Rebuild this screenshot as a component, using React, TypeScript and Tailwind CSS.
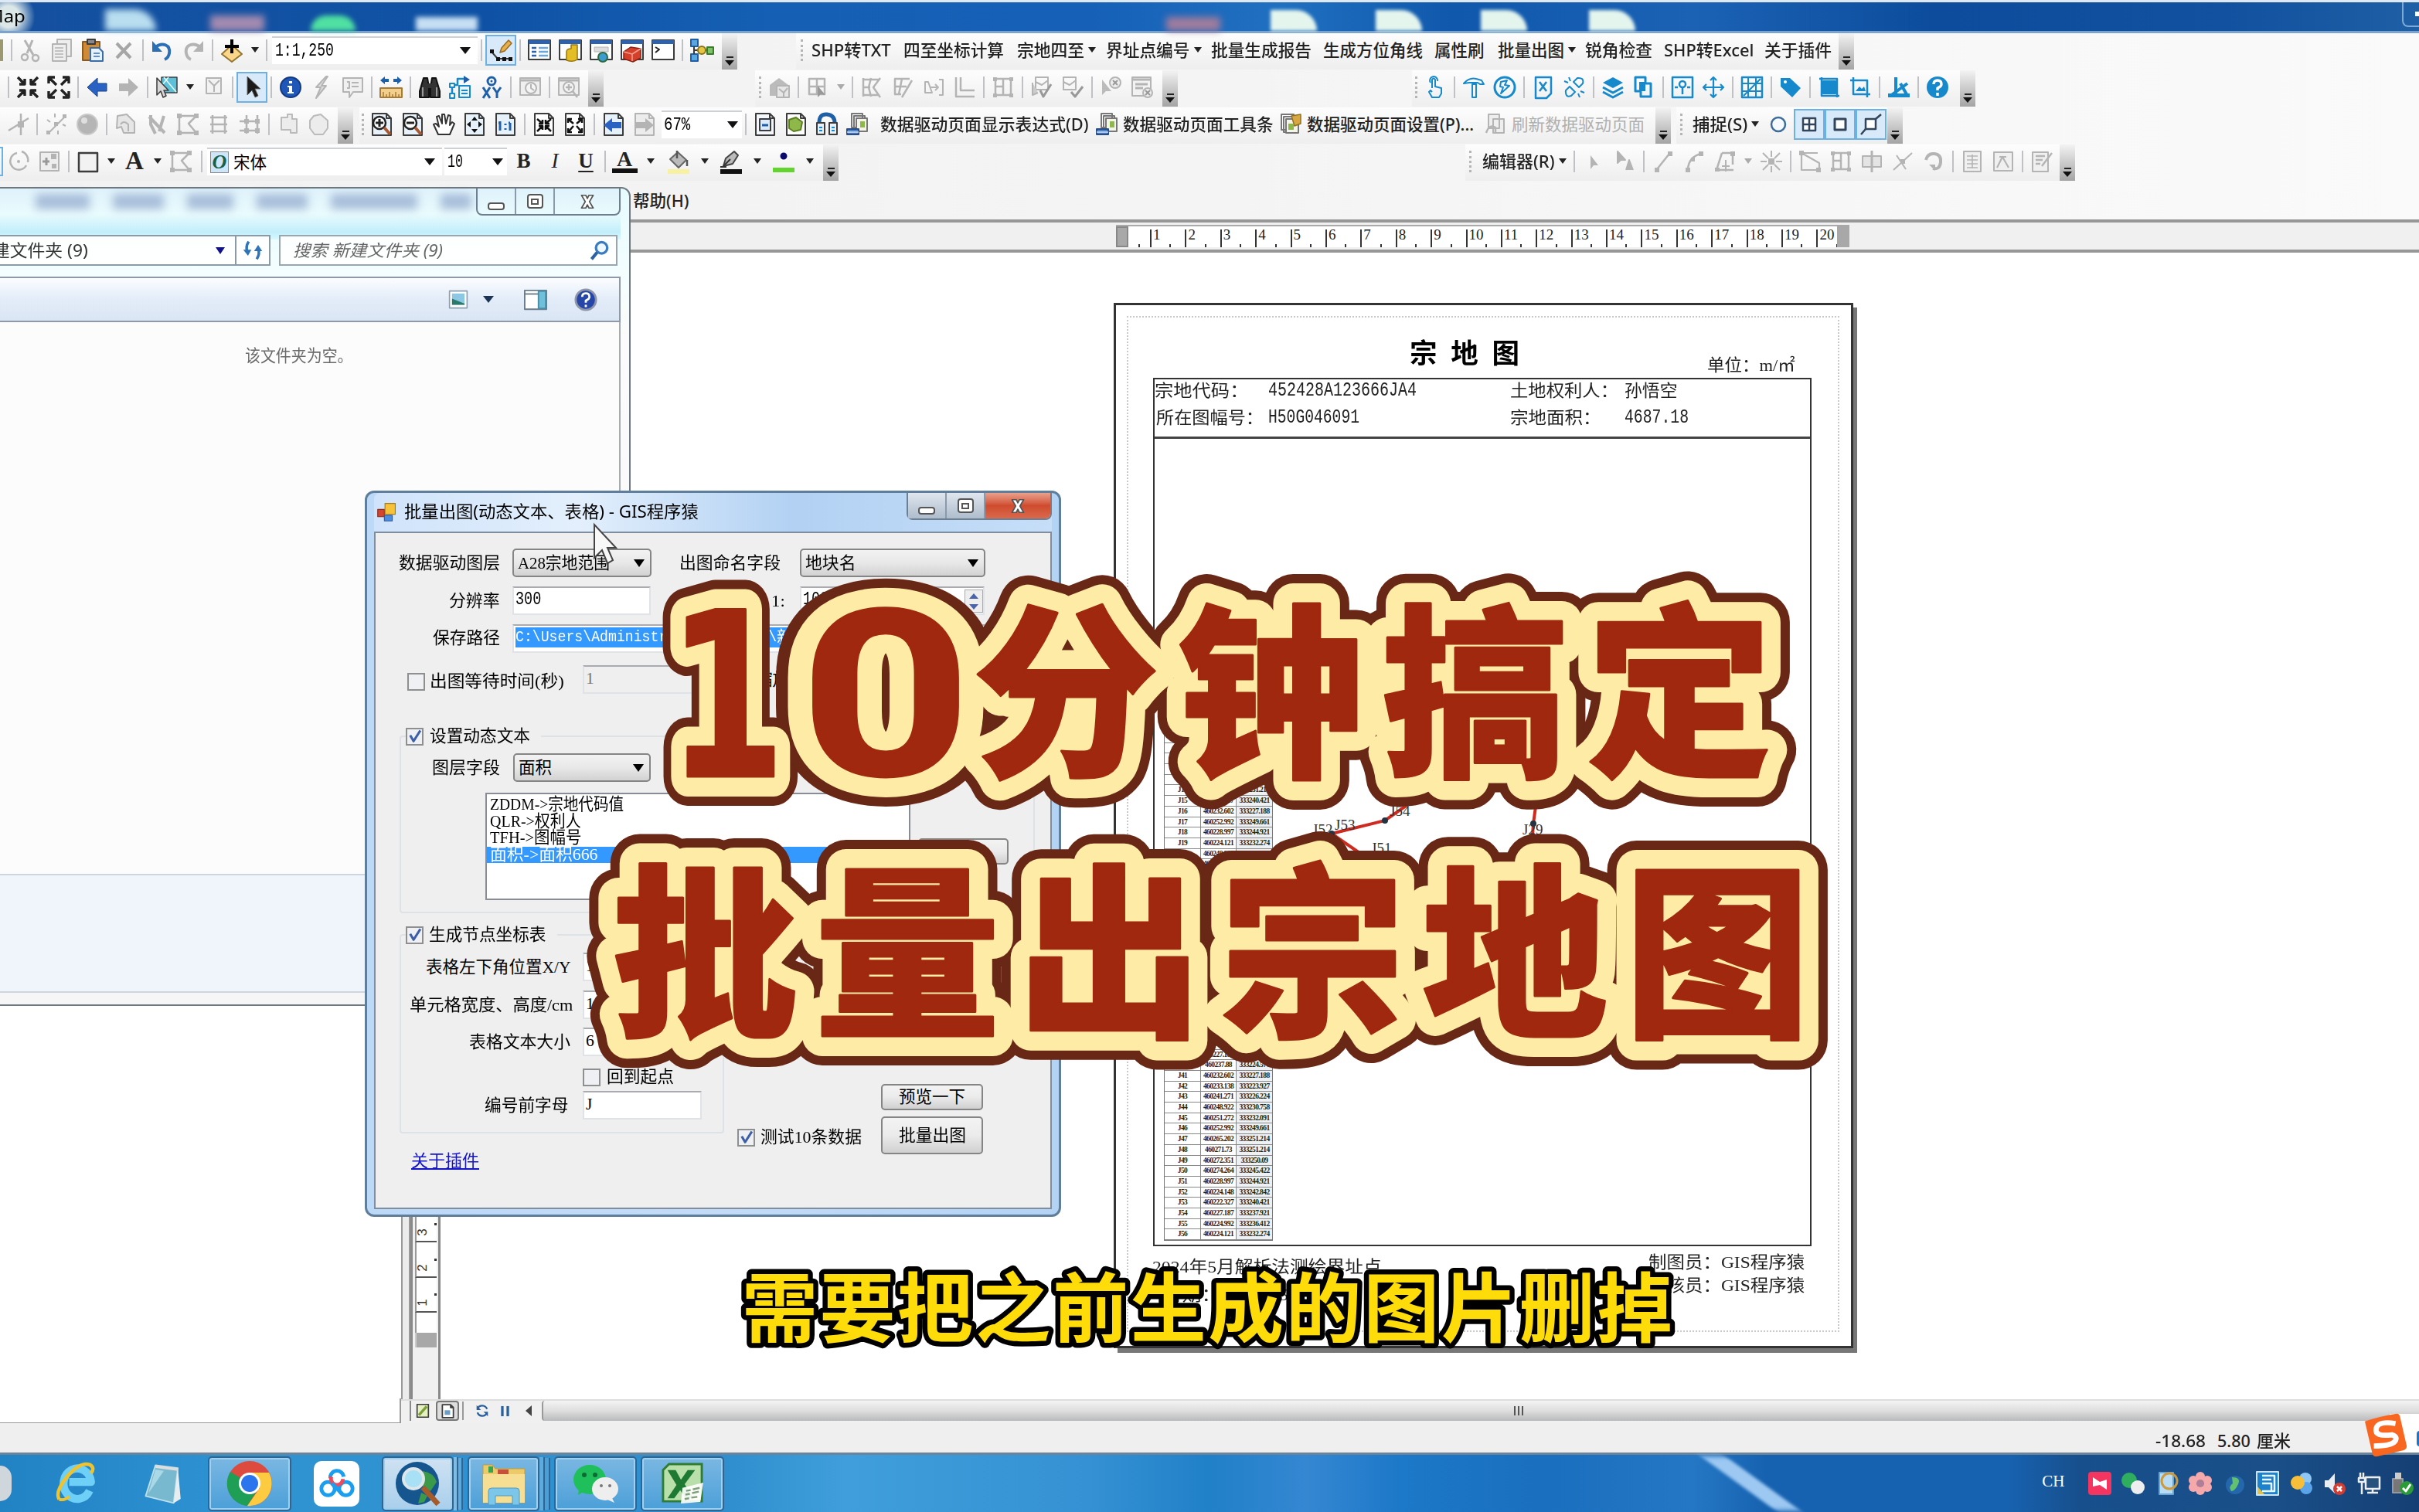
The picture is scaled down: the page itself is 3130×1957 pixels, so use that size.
import React, { useLayoutEffect, useRef, ReactNode } from "react";

const UI = "font-['Noto_Sans','Noto_Sans_CJK_SC',sans-serif]";
const SONG = "font-['Liberation_Serif','Noto_Sans_CJK_SC',serif]";
const MONO = "font-['Liberation_Mono','Noto_Sans_CJK_SC',monospace]";

/* One line of text, condensed or stretched to the width of its box. */
function Fit({ className = "", children }: { className?: string; children: ReactNode }) {
  const box = useRef<HTMLSpanElement>(null);
  const txt = useRef<HTMLSpanElement>(null);
  useLayoutEffect(() => {
    const b = box.current, t = txt.current;
    if (b && t) t.style.transform = `scaleX(${b.clientWidth / t.offsetWidth})`;
  }, []);
  return (
    <span ref={box} className={"block shrink-0 whitespace-pre text-[21.5px] leading-[26px] " + className}>
      <span ref={txt} className="inline-block origin-left align-top">{children}</span>
    </span>
  );
}

type Layer = [string, string?, string?, number?];
/* Icon from layers of [path, fill, stroke, strokeWidth] on a 32 unit grid. */
function Ic({ l, className = "size-8" }: { l: Layer[]; className?: string }) {
  return (
    <svg viewBox="0 0 32 32" className={"shrink-0 " + className}>
      {l.map(([d, f, s, w], i) => (
        <path key={i} d={d} fill={f || "none"} stroke={s || "none"} strokeWidth={w ?? 2} strokeLinejoin="round" />
      ))}
    </svg>
  );
}
const g = "#b4b4b4", k = "#3c3c3c", b = "#1689cc", nb = "#1e5fa8";
const rect = (x: number, y: number, w: number, h: number) => `M${x} ${y}h${w}v${h}h${-w}z`;
const circ = (x: number, y: number, r: number) => `M${x - r} ${y}a${r} ${r} 0 1 0 ${2 * r} 0a${r} ${r} 0 1 0 ${-2 * r} 0`;
const page = "M4 2h18l6 6v22h-24zM22 2v6h6";

const win = (extra: Layer[]): Layer[] => [[rect(2, 3, 28, 25), "#fff", k, 2], [rect(2, 3, 28, 5), "#2f62ad"], ...extra];
const ICONS: Record<string, Layer[]> = {
  cut: [["M8 3l11 19M18 3l-7 17", "", g, 3], [circ(8, 25, 4), "", g, 2.5], [circ(22, 26, 4), "", g, 2.5]],
  copy: [[rect(10, 2, 18, 22), "#eee", g], [rect(4, 8, 18, 22), "#eee", g], ["M7 13h11M7 17h11M7 21h11M7 25h11", "", g, 1.5]],
  paste: [[rect(3, 5, 22, 24), "#d08a35", "#8a5a20"], [rect(9, 2, 10, 6), "#888", k], ["M13 13h11l5 5v12h-16z", "#e4f2ff", "#3b6ea5"], ["M17 20h8M17 24h8", "", "#3b6ea5", 1.5]],
  del: [["M7 7l18 19M25 7l-18 19", "", "#a6a6a6", 4]],
  undo: [["M7 12c9-7 20-3 18 8q-1 6-6 8", "", "#2b6fb4", 4], ["M3 4v14h13z", "#2b6fb4"]],
  redo: [["M25 12c-9-7-20-3-18 8q1 6 6 8", "", g, 4], ["M29 4v14h-13z", g]],
  add: [["M16 9l13 12-13 10-13-10z", "#fbd68a", "#93752e"], ["M16 2v18M7 11h18", "", "#000", 4]],
  editor: [["M4 18l8 9h18", "", k, 2], [rect(2, 15, 5, 5), "#111"], [rect(10, 25, 5, 5), "#111"], [rect(18, 25, 5, 5), "#111"], [rect(26, 25, 5, 5), "#111"], ["M15 19l2-6 9-10 4 4-9 10z", "#e8b04a", "#9a6a22", 1.5]],
  toc: win([["M6 13h6M6 18h6M6 23h6", "", "#2f62ad", 2.5], ["M15 13h12M15 18h12M15 23h12", "", "#6ba7d8", 2.5]]),
  cat: win([["M11 18q0-4 6-4v-5h8v19q-5 4-14 1z", "#e4be27", "#98770c", 1.5]]),
  search: win([["M7 12h18v6h-18z", "#ddd", g, 1], [circ(18, 25, 6), "#3e9bd0", "#2b6a3a", 2]]),
  tool: win([["M5 18l9-6 13 2v12l-10 5-12-4z", "#d5402b", "#8a2214", 1.5], ["M5 18l11 3v9M16 21l11-7", "", "#f5a090", 1.5]]),
  py: win([["M6 12l5 3-5 4", "", "#222", 2]]),
  model: [[rect(2, 2, 9, 9), "#5aa7e0", nb], [rect(2, 21, 9, 9), "#5aa7e0", nb], ["M6 11v10M6 16h18", "", k], [circ(16, 16, 5), "#e7c544", "#8a741a"], [rect(23, 12, 8, 9), "#7bc365", "#3d7a2c"]],
  zin: [["M3 3l9 9M12 5v7H5M29 3l-9 9M20 5v7h7M3 29l9-9M5 20h7v7M29 29l-9-9M27 20h-7v7", "", "#222", 3.4]],
  zout: [["M13 13L5 5M3 11V3h8M19 13l8-8M21 3h8v8M13 19l-8 8M3 21v8h8M19 19l8 8M21 29h8v-8", "", "#222", 3.4]],
  back: [["M3 16L16 4v7h12v10h-12v7z", "#2a62c4", "#173f8c", 1]],
  fwd: [["M29 16L16 4v7h-12v10h12v7z", g]],
  select: [["M9 3h20v20h-20z", "#5cc0d8", k, 1.5], ["M12 3l16 19M9 14l9-11", "", "#e8fbff", 1.5], ["M3 4v22l5-5 3 8 4-2-3-7h6z", "#d7d7d7", k, 1.5]],
  clear: [[rect(7, 4, 19, 20), "#f2f2f2", g], ["M10 7l7 7 7-7M17 14v8", "", g]],
  ptr: [["M10 2v24l6-6 4 9 4-2-4-9h7z", "#1b1b1b", "#666", 1]],
  info: [[circ(16, 16, 13), "#1f57b8", "#123a83"], ["M14 8h4v3h-4zM12 14h6v8h2v2h-8v-2h2v-6h-2z", "#fff"]],
  bolt: [["M22 2l-13 14h6l-6 14 13-16h-6l8-12z", "#ddd", g]],
  popup: [["M4 4h25v18h-12l-5 7v-7h-8z", "#f0f0f0", g], ["M9 9h3v8h-3M15 10h9M15 15h9", "", g]],
  ruler: [["M2 7l6-5v3h5v4h-5v3zM30 7l-6-5v3h-5v4h5v3z", nb], [rect(2, 17, 28, 12), "#f3cf8e", "#a87b34"], ["M6 29v-7M10 29v-4M14 29v-7M18 29v-4M22 29v-7M26 29v-4", "", "#a87b34", 1.5]],
  find: [["M8 4h5l2 12v13h-12v-8zM24 4h-5l-2 12v13h12v-8z", "#333", "#111"], ["M7 16v12M25 16v12", "", "#999", 2], [rect(13, 11, 6, 6), "#333"]],
  route: [["M5 26v-13h7v-8h10", "", b, 2.5], ["M20 1l8 5-8 5z", nb], [rect(2, 24, 6, 6), "#fff", b], [rect(2, 11, 6, 5), "#fff", b], [rect(14, 14, 14, 15), "#e8f4ff", b], ["M17 20h8M17 24h8", "", b]],
  xy: [[circ(16, 8, 5), "", nb, 3], [circ(16, 8, 1.5), nb], ["M5 16l9 14M14 16l-9 14M18 16l5 7 5-7M23 23v7", "", nb, 3]],
  time: [["M3 4h26v22h-26z", "#efefef", g], ["M3 7h26", "", g, 3], [circ(17, 17, 7), "#f4f4f4", g], ["M17 12v5l4 3", "", g]],
  view: [["M3 4h26v22h-26z", "#efefef", g], ["M3 7h26", "", g, 3], [circ(16, 16, 7), "#f4f4f4", g], ["M16 12v8M12 16h8M21 21l6 8", "", g, 2.5]],
  house: [["M4 13l12-9 12 9v14h-24z", "#bbb"], [rect(13, 14, 16, 15), "#e6e6e6", g], ["M16 18l6 5 5-6M22 23v5", "", g]],
  meshp: [["M5 5h20v20h-20zM5 15h20M15 5v20", "", g, 2.5], ["M16 14v15l4-4 6 1z", "#999"]],
  mesh1: [["M5 4v24M5 6h10M5 16h9M5 26h9M15 4l-3 12 3 12M27 4l-9 12 9 13M15 6h11M15 26h10", "", g, 2.5]],
  mesh2: [["M5 5h20M5 15h16M5 25h9M6 5v20M15 5l-4 20M28 7l-13 22", "", g, 2.5]],
  gap: [["M5 9v14h9l-5-14zM12 16h8M23 6h5v20h-5M18 12l4 4-4 4", "", g, 2]],
  corner: [["M5 3v25h24M11 3v17h18", "", g, 2.5]],
  box: [["M6 5h20v21h-20zM16 5v21M6 15h10", "", g, 2.5], [rect(3, 3, 5, 5), g], [rect(24, 3, 5, 5), g], [rect(3, 24, 5, 5), g], [rect(24, 24, 5, 5), g]],
  chk: [["M8 3h16v16h-16zM8 9l8 4 8-6", "", g, 2], ["M4 10v16l7-3", "#ccc", g], ["M14 20l4 8 10-16", "", "#999", 3]],
  chk2: [["M4 3h16v16h-16zM4 9l8 4 8-6", "", g, 2], ["M14 22l5 6 10-13", "", "#999", 3]],
  nosel: [["M4 6v20l5-5h7z", "#bbb"], [circ(21, 10, 7), "#eee", g], ["M18 7l6 6M24 7l-6 6", "", "#999"]],
  tabx: [[rect(3, 3, 24, 24), "#f2f2f2", g], ["M3 6h24M7 12h16M7 17h10", "", g, 3], [circ(23, 23, 6), "#eee", g], ["M20 20l6 6M26 20l-6 6", "", "#999"]],
  hand1: [["M12 17V6q2-3 4 0v9l8 2v7l-3 5h-9l-4-7 2-2 2 2M10 10a5 5 0 1 1 9-2", "", b, 2]],
  hammer: [["M14 12h5v17h-5z", "", b, 2], ["M3 11q7-8 16-6l7 2 3 5h-5l-3-2h-11z", "", b, 2]],
  run: [[circ(16, 16, 13), "", b, 3], ["M11 9l8-2-3 6 6 1-11 10 3-8-4-1z", "", b, 2]],
  filex: [["M6 3h20v21l-6 6h-14z", "", b, 2.5], ["M11 9l9 12M20 9l-9 12", "", b, 2.5]],
  link: [["M5 20l5-5 7 7-5 5q-8 3-7-7zM27 11l-5 5-7-7 5-5q9-1 7 7zM3 8l5 2M9 3l2 5M29 23l-5-2M23 29l-2-5", "", b, 2]],
  layers: [["M16 3l13 7-13 7-13-7z", b], ["M3 16l13 7 13-7M3 22l13 7 13-7", "", b, 3]],
  merge: [["M5 3h13v8h7v17h-13v-7h-7z", "", b, 3], ["M10 9h8v12h-8z", b]],
  pin: [[rect(3, 3, 26, 26), "", b, 2.5], [circ(16, 12, 4), "", b, 2.5], ["M16 16v9M6 16h4M22 16h4", "", b, 2.5]],
  move: [["M16 3v26M3 16h26M12 7l4-4 4 4M12 25l4 4 4-4M7 12l-4 4 4 4M25 12l4 4-4 4", "", b, 2.2]],
  grid: [[rect(3, 3, 26, 26), "", b, 2.5], ["M11 3v26M21 3v26M3 11h26M3 21h26M5 27L27 5", "", b, 2]],
  tag: [["M3 4h12l14 13-11 12-15-14z", b], [circ(9, 9, 2), "#fff"]],
  crop1: [[rect(8, 8, 16, 16), b, b], ["M3 5h23v24M6 3v24h23", "", b, 2.5]],
  crop2: [["M3 7h22v22M7 3v22h22", "", b, 2.5], ["M10 21l5-6 3 3 3-3 2 6z", b]],
  angle: [["M12 3v22M5 27l22-16", "", b, 4], [rect(2, 24, 28, 5), b], ["M18 11l8 14", "", b, 4]],
  help: [[circ(16, 16, 14), b], ["M11 12q0-5 5-5t5 5q0 3-5 5v3M16 23v4", "", "#fff", 3.4]],
  cross: [["M20 2v28M4 24l26-16", "", g, 2.5], [rect(16, 12, 8, 8), g]],
  pts: [["M6 27L27 6", "", g, 2], [rect(3, 24, 5, 5), g], [rect(13, 13, 5, 5), g], [rect(24, 3, 5, 5), g], ["M14 2v5M4 10l4 3M28 18l-4-2M18 29v-5", "", g]],
  ball: [[circ(16, 16, 13), "#b5b5b5", "#c9c9c9"], [circ(12, 11, 4), "#dedede"]],
  page1: [["M5 5l12-2 10 10v14h-14l-3-8-6 2z", "#e6e6e6", g], ["M9 16q4-6 10 0v9", "", g]],
  tools: [["M6 6l20 21M25 5l-6 20M8 4v12l6 12", "", g, 4]],
  flat: [["M5 7h22M5 16h22M5 25h22M8 4v24M24 4v24", "", g, 2.5]],
  net: [["M12 4v24M26 4v24M3 12h26M3 24h26", "", g, 2.5], [rect(9, 9, 6, 6), g], [rect(23, 9, 6, 6), g], [rect(9, 21, 6, 6), g], [rect(23, 21, 6, 6), g]],
  dots: [["M7 7h8v-4h6v6h6v18h-8v-4h-12z", "#ececec", "#bbb", 2]],
  dots2: [["M9 5l9-2 9 8v10l-6 8h-11l-6-8v-10z", "#ececec", "#bbb", 2]],
  pzin: [[page, "#e6f1fa", k], [circ(13, 14, 8), "#fff", "#222", 2.5], ["M13 9v10M8 14h10", "", "#222", 3], ["M19 20l8 9", "", "#a85a32", 4]],
  pzout: [[page, "#e6f1fa", k], [circ(13, 14, 8), "#fff", "#222", 2.5], ["M8 14h10", "", "#222", 3], ["M19 20l8 9", "", "#a85a32", 4]],
  pan: [["M9 29l-6-13 3-1 4 4-3-13 3-1 4 10v-12h3l2 12 3-11 3 1-1 12 3-4 3 2-6 14z", "#fff", "#333", 2]],
  pfull: [[page, "#e6f1fa", k], ["M16 6l4 5h-8zM16 27l4-5h-8zM6 16l5-4v8zM26 16l-5-4v8z", "#111"]],
  p11: [[page, "#e6f1fa", k], ["M9 12v12M7 14h3M22 14v10M20 14h2M16 15v2M16 21v2", "", nb, 3]],
  pin2: [[page, "#fff", k], ["M7 9l7 6M25 9l-7 6M7 25l7-7M25 25l-7-7M14 10v5h-5M18 10v5h5M14 23v-5h-5M18 23v-5h5", "", "#111", 2.5]],
  pout2: [[page, "#fff", k], ["M14 15l-6-5M18 15l6-5M14 18l-6 7M18 18l6 7M7 14v-5h5M25 14v-5h-5M7 21v5h5M25 21v5h-5", "", "#111", 2.5]],
  pback: [[page, "#e6f1fa", k], ["M3 17l11-9v5h12v8h-12v5z", "#2a62c4"]],
  pfwd: [[page, "#ececec", g], ["M28 17l-11-9v5h-12v8h12v5z", g]],
  lay: [[page, "#f4f8fc", k], [rect(9, 9, 14, 15), "#dcebfb", k], ["M12 17h8", "", nb, 3]],
  lay2: [[page, "#fff", k], ["M7 10l9-3 8 6-2 10-9 2-6-4z", "#8fb84a", "#5d7f22"]],
  lay3: [["M6 14q0-12 10-11t10 11", "", nb, 5], ["M3 14h10v15h-10zM19 14h10v15h-10z", "#e6f1fa", k], ["M6 20h4M22 20h4M6 24h4M22 24h4", "", b]],
  ddp: [["M8 2h14v18h-14zM11 5h14v18h-14z", "#fff", "#777"], ["M14 8h14v17h-14z", "#f4f4e8", "#777"], [rect(19, 12, 6, 8), "#8fb84a"], ["M2 22h15v7h-15z", "#4d82c4", "#2a4d85"], ["M2 26h15", "", "#cfe2ff", 1.5]],
  ddp2: [["M3 3h16v20h-16zM6 6h16v20h-16z", "#fff", "#777"], ["M9 9h16v18h-16z", "#f4f4e8", "#777"], ["M16 5l12-2v12l-8 3z", "#d9a741", "#93701e", 1.5], [rect(12, 15, 7, 8), "#8fb84a"]],
  ddp3: [["M6 3h14v18h-14zM12 9h14v18h-14z", "#eee", g], ["M3 27q4-12 12-7v8", "", g, 2.5]],
  circle: [[circ(16, 16, 9), "#f4faff", "#3d6c99", 2.5]],
  grid4: [[rect(8, 8, 16, 16), "#fff", "#31465c", 2.5], ["M16 8v16M8 16h16", "", "#31465c", 2.5]],
  sq: [[rect(9, 9, 14, 14), "#fff", "#31465c", 3]],
  edge: [[rect(9, 9, 13, 13), "#fff", "#31465c", 2.5], ["M3 29l6-7M22 9l7-6", "", "#31465c", 2.5]],
  rot: [["M14 5a11 11 0 1 0 12 16", "", g, 2.5], ["M20 3a12 12 0 0 1 8 14", "", g, 2.5], [circ(16, 16, 2), g]],
  gridplus: [[rect(4, 4, 24, 24), "#eee", g], ["M7 16h9M12 11v10", "", "#999", 3], [rect(18, 6, 7, 7), g], [rect(19, 19, 6, 6), g]],
  shape: [[rect(4, 5, 24, 24), "#f2f2f2", k, 2.5]],
  poly: [["M5 5h22l-10 10 10 12h-22z", "", g, 2.5], [rect(2, 2, 6, 6), g], [rect(24, 2, 6, 6), g], [rect(2, 24, 6, 6), g], [rect(24, 24, 6, 6), g]],
  paint: [["M5 13l10-9 11 10-10 10z", "#bbb", "#666"], ["M14 12V2M27 14v8", "", "#555", 2.5], [rect(2, 26, 28, 6), "#f8f2a0"]],
  pen: [["M6 22l3-10 11-9 5 5-7 11z", "#bbb", "#444"], ["M6 22l9-9M2 23h8", "", "#333", 2], [rect(2, 26, 28, 6), "#111"]],
  dot: [[circ(16, 9, 4.5), "#0b0b6e"], [rect(2, 24, 28, 6), "#61d42e"]],
  arr: [["M12 8v18l4-5h6z", g]],
  arrA: [["M7 3v15l4-4h6zM18 27l4-13 5 13M20 22h6", g, g, 2]],
  ln: [["M8 26L24 6", "", g, 2.5], [rect(5, 24, 6, 6), g], [rect(22, 3, 6, 6), g]],
  ln2: [["M8 26q1-16 17-20", "", g, 2.5], [rect(5, 24, 6, 6), g], [rect(12, 11, 5, 5), g], [rect(22, 3, 6, 6), g]],
  trap: [["M12 5h14M12 5l-7 22h22M26 5v15", "", g, 2.5], [rect(23, 3, 6, 6), g], [rect(3, 24, 6, 5), g], ["M17 14v15M12 22h10", "", g]],
  burst: [["M16 2v8M16 22v8M2 16h8M22 16h8M5 5l7 7M27 5l-7 7M5 27l7-7M27 27l-7-7", "", g, 2], [rect(12, 12, 8, 8), g]],
  tri: [["M5 4v23h23v-9L5 5h21", "", g, 2.2], [rect(2, 2, 6, 6), g], [rect(24, 24, 6, 6), g]],
  mid: [[rect(4, 9, 24, 14), "#e4e4e4", g], ["M16 2v28", "", g, 3]],
  xx: [["M4 27L28 5M8 8l12 18", "", g, 2], [rect(13, 13, 6, 6), g]],
  rotr: [["M6 14q2-9 11-8t8 11-10 8", "", g, 4], ["M10 20h8v8z", g]],
  tbl: [[rect(5, 3, 22, 26), "#f0f0f0", g], ["M9 9h14M9 14h14M9 19h14M9 24h14M16 7v18", "", g, 1.6]],
  cert: [[rect(4, 4, 24, 24), "#f0f0f0", g], ["M8 24l7-14 8 14M11 10h9", "", g, 2.2]],
  edt: [[rect(4, 4, 20, 25), "#f0f0f0", g], ["M8 9h12M8 14h9M8 19h6M29 5l-13 17", "", g, 2.4]],
};

const B = ({ n, on = false }: { n: string; on?: boolean }) => (
  <span className={"flex h-10 w-10 shrink-0 items-center justify-center " + (on ? "border-2 border-[#6bb1e4] bg-[#d8eaf9]" : "")}>
    <Ic l={ICONS[n]} />
  </span>
);
const Tools = ({ n }: { n: string }) => (
  <>{n.trim().split(" ").map((x, i) => (x === "|" ? <Sep key={i} /> : x === "v" ? <Caret key={i} /> : <B key={i} n={x} />))}</>
);
const Sep = () => <span className="mx-[4px] h-7 w-[2px] shrink-0 bg-[#bfc1c4]" />;
const Caret = ({ className = "border-x-[5px] border-t-[7px] border-t-[#222]" }: { className?: string }) => (
  <span className={"mx-[5px] h-0 w-0 shrink-0 border-x-transparent " + className} />
);
const More = () => (
  <span className="-mb-[4px] flex w-[20px] shrink-0 flex-col items-center justify-end gap-[3px] self-stretch bg-gradient-to-b from-[#f3f3f3] to-[#a4a4a4] pb-[5px]">
    <span className="h-[2px] w-[9px] bg-[#222]" />
    <span className="h-0 w-0 border-x-[6px] border-t-[7px] border-x-transparent border-t-[#111]" />
  </span>
);
const Grip = () => <span className="mr-[3px] h-[28px] w-0 shrink-0 border-l-[3px] border-dotted border-[#b5b5b5]" />;
const Bar = ({ className = "", children }: { className?: string; children: ReactNode }) => (
  <div className={"flex h-[47px] shrink-0 items-center bg-gradient-to-b from-[#fdfdfd] to-[#eeeeee] pb-[4px] " + className}>{children}</div>
);
const L = ({ className, children }: { className: string; children: ReactNode }) => (
  <Fit className={"font-medium text-[#222] " + className}>{children}</Fit>
);
const Field = ({ className, children }: { className: string; children?: ReactNode }) => (
  <div className={"flex shrink-0 items-center justify-between border-t-2 border-[#cdd1d6] bg-white " + className}>{children}</div>
);
const BIG = "border-x-[7px] border-t-[9px] border-t-[#111]";
const DIM = "border-x-[5px] border-t-[7px] border-t-[#aaa]";

function Toolbars() {
  return (
    <div className={"flex h-[241px] flex-col gap-[1px] bg-gradient-to-r from-[#f2f2f2] via-[#f4f4f4] to-[#fafafa] " + UI}>
      <div className="flex">
        <Bar className="w-[954px]">
          <span className="h-7 w-[4px] bg-[#9c9870]" />
          <span className="w-[6px]" />
          <Sep /><Tools n="cut copy paste del | undo redo | add" /><Caret /><Sep />
          <Field className="ml-[2px] h-[36px] w-[266px] px-1">
            <Fit className={"w-[76px] !text-[24px] text-black " + MONO}>1:1,250</Fit><Caret className={BIG} />
          </Field>
          <Sep /><B n="editor" on /><Sep /><Tools n="toc cat search tool py | model" /><span className="grow" /><More />
        </Bar>
        <Bar className="ml-[76px] w-[1369px] pl-[6px]">
          <Grip />
          <L className="ml-[8px] w-[103px]">SHP转TXT</L>
          <L className="ml-[16px] w-[130px]">四至坐标计算</L>
          <L className="ml-[17px] w-[87px]">宗地四至</L><Caret />
          <L className="ml-[8px] w-[109px]">界址点编号</L><Caret />
          <L className="ml-[7px] w-[130px]">批量生成报告</L>
          <L className="ml-[15px] w-[129px]">生成方位角线</L>
          <L className="ml-[15px] w-[65px]">属性刷</L>
          <L className="ml-[17px] w-[86px]">批量出图</L><Caret />
          <L className="ml-[7px] w-[87px]">锐角检查</L>
          <L className="ml-[15px] w-[116px]">SHP转Excel</L>
          <L className="ml-[14px] w-[87px]">关于插件</L>
          <span className="grow" /><More />
        </Bar>
      </div>
      <div className="flex">
        <Bar className="w-[781px] pl-[6px]">
          <Sep /><Tools n="zin zout | back fwd | select v clear |" />
          <B n="ptr" on /><Sep />
          <Tools n="info bolt popup | ruler | find route xy | time | view" /><span className="grow" /><More />
        </Bar>
        <Bar className="ml-[196px] w-[547px] pl-[5px]">
          <Grip /><Tools n="house | meshp" /><Caret className={DIM} /><Tools n="| mesh1 mesh2 gap corner | box | chk chk2 | nosel tabx" /><span className="grow" /><More />
        </Bar>
        <Bar className="ml-[303px] w-[729px] pl-[4px]">
          <Grip /><Tools n="hand1 | hammer run | filex link | layers merge | pin move | grid | tag | crop1 crop2 | angle | help" /><span className="grow" /><More />
        </Bar>
      </div>
      <div className="flex">
        <Bar className="w-[457px] pl-[3px]">
          <Tools n="cross | pts ball | page1 tools poly flat net | dots dots2" /><span className="grow" /><More />
        </Bar>
        <Bar className="ml-[8px] w-[1697px] pl-[3px]">
          <Grip /><Tools n="pzin pzout pan pfull p11 | pin2 pout2 |" /><Tools n="pback pfwd" />
          <Field className="ml-[2px] h-[36px] w-[104px] pl-[3px] pr-0">
            <Fit className={"w-[34px] !text-[24px] text-black " + MONO}>67%</Fit><Caret className={BIG} />
          </Field>
          <Sep /><Tools n="lay lay2 lay3 ddp" />
          <L className="ml-[9px] w-[270px]">数据驱动页面显示表达式(D)</L>
          <span className="w-[4px]" /><B n="ddp" />
          <L className="w-[195px]">数据驱动页面工具条</L>
          <span className="w-[3px]" /><B n="ddp2" />
          <L className="w-[216px]">数据驱动页面设置(P)...</L>
          <span className="w-[9px]" /><B n="ddp3" />
          <Fit className="w-[172px] text-[#b0b0b0]">刷新数据驱动页面</Fit>
          <span className="grow" /><More />
        </Bar>
        <Bar className="ml-[7px] w-[293px] pl-[5px]">
          <Grip /><L className="ml-[10px] w-[71px]">捕捉(S)</L><Caret /><B n="circle" />
          <B n="grid4" on /><B n="sq" on /><B n="edge" on /><span className="grow" /><More />
        </Bar>
      </div>
      <div className="flex">
        <Bar className="w-[1085px]">
          <span className="h-[38px] w-[4px] border-y-2 border-r-2 border-[#6bb1e4]" />
          <Tools n="rot gridplus | shape v" />
          <span className="w-10 text-center font-['Liberation_Serif',serif] text-[33px] font-bold text-[#222]">A</span>
          <Caret /><Tools n="poly" /><span className="w-[2px]" /><Sep />
          <Field className="ml-[2px] h-[36px] w-[304px] px-1">
            <span className="flex items-center gap-[6px]">
              <span className="flex h-7 w-6 items-center justify-center border border-[#888] bg-[#cde6fa] font-['Liberation_Serif',serif] text-[26px] font-bold italic leading-none text-[#17614a]">O</span>
              <Fit className="w-[43px] text-black">宋体</Fit>
            </span>
            <Caret className={BIG} />
          </Field>
          <Field className="ml-[3px] h-[36px] w-[81px] pl-1">
            <Fit className={"w-[20px] !text-[24px] text-black " + MONO}>10</Fit><Caret className={BIG} />
          </Field>
          <span className="ml-1 flex font-['Liberation_Serif',serif] text-[27px] font-bold leading-none text-[#222]">
            <span className="w-[35px] text-center">B</span>
            <span className="ml-[3px] w-[40px] text-center font-normal italic">I</span>
            <span className="w-[40px] text-center underline underline-offset-4">U</span>
          </span>
          <Sep /><span className="w-[2px]" />
          <span className="flex w-[36px] flex-col items-center font-['Liberation_Serif',serif] text-[28px] font-bold leading-[24px] text-[#222]">A<span className="h-[6px] w-[33px] bg-[#111]" /></span>
          <span className="flex px-[6px]"><Caret /></span><B n="paint" />
          <span className="flex px-[4px]"><Caret /></span><B n="pen" />
          <span className="flex px-[4px]"><Caret /></span><B n="dot" />
          <span className="flex pl-[4px]"><Caret /></span><span className="grow" /><More />
        </Bar>
        <Bar className="ml-[811px] w-[789px] pl-[5px]">
          <Grip /><L className="ml-[11px] w-[94px]">编辑器(R)</L><Caret />
          <Tools n="| arr arrA | ln ln2 trap" /><Caret className={DIM} />
          <Tools n="burst | tri box mid xx rotr | tbl cert | edt" /><span className="grow" /><More />
        </Bar>
      </div>
      <div className="flex grow items-center pl-[819px]"><L className="w-[73px]">帮助(H)</L></div>
    </div>
  );
}

function TitleBar() {
  return (
    <div className="flex h-[43px] items-end border-b-[3px] border-t-[3px] border-b-[#7aa3cf] border-t-[#dfe9f5] bg-[linear-gradient(90deg,#15509f_0%,#0f52a5_20%,#1560b4_32%,#1660b8_45%,#2070c0_53%,#1058ac_60%,#1b62b5_70%,#0d4c9c_80%,#11519f_92%,#1e5fa5_100%)]">
      <div className={"-ml-[17px] flex h-full w-[70px] items-center bg-[radial-gradient(circle_at_40%_50%,#dce8e8_30%,transparent_75%)] pb-[1px] " + UI}>
        <Fit className="w-[50px] text-black">Map</Fit>
      </div>
      <span className="ml-[83px] h-[28px] w-[66px] rounded-tr-[28px] bg-[#b9def0] blur-[4px]" />
      <span className="ml-[70px] h-[20px] w-[70px] bg-[#a58bb0] blur-[5px]" />
      <span className="ml-[60px] h-[20px] w-[58px] rounded-t-full bg-[#4fe0a2] blur-[3px]" />
      <span className="ml-[78px] h-[18px] w-[80px] bg-[#c6dff3] blur-[3px]" />
      <span className="ml-[891px] h-[18px] w-[70px] bg-[#a17c9c] blur-[5px]" />
      <span className="ml-[65px] h-[27px] w-[60px] rounded-tr-[40px] bg-[#e4f5ee] blur-[2px]" />
      <span className="ml-[76px] h-[27px] w-[60px] rounded-tr-[40px] bg-[#e4f5ee] blur-[2px]" />
      <span className="ml-[76px] h-[27px] w-[60px] rounded-tr-[40px] bg-[#e4f5ee] blur-[2px]" />
      <span className="ml-[80px] h-[27px] w-[60px] rounded-tr-[40px] bg-[#e4f5ee] blur-[2px]" />
      <span className="ml-auto flex h-[32px] w-[22px] items-center justify-end self-start rounded-bl-lg border-b-2 border-l-2 border-[#7ea9d6]"><span className="h-[6px] w-[5px] bg-white" /></span>
    </div>
  );
}

function HRuler() {
  return (
    <div className="flex h-[43px] items-center border-y-[4px] border-[#979797] bg-[#f0f0f0] pl-[1444px]">
      <div className="flex h-[29px] w-[949px] border-t-2 border-[#aaa] bg-white">
        <div className="h-full w-[16px] shrink-0 border-2 border-[#888] bg-[#a8a8a8]" />
        <div className="flex w-[28px] shrink-0 items-end justify-center"><span className="h-[4px] w-[2px] bg-[#333]" /></div>
        {Array.from({ length: 20 }, (_, i) => (
          <div key={i} className="flex w-[45.4px] shrink-0 justify-between">
            <span className="mt-[4px] h-[23px] border-l-2 border-[#333] pl-[2px] font-['Liberation_Serif',serif] text-[19px] leading-[13px] text-[#222]">{i + 1}</span>
            <span className="mr-[18px] h-[4px] w-[2px] self-end bg-[#333]" />
          </div>
        ))}
      </div>
      <div className="-ml-[16px] h-[29px] w-[16px] bg-[#a8a8a8]" />
    </div>
  );
}

const COORDS = [
  ["460237.88", "333224.576"], ["460232.602", "333227.188"], ["460233.138", "333223.927"], ["460241.271", "333226.224"],
  ["460248.922", "333230.758"], ["460251.272", "333232.091"], ["460252.992", "333249.661"], ["460265.202", "333251.214"],
  ["460271.73", "333251.214"], ["460272.351", "333250.09"], ["460274.264", "333245.422"], ["460228.997", "333244.921"],
  ["460224.148", "333242.842"], ["460222.327", "333240.421"], ["460227.187", "333237.921"], ["460224.992", "333236.412"], ["460224.121", "333232.274"],
];

function Table() {
  return (
    <div className={"ml-[12px] mt-[379px] w-[141px] border border-[#777] " + SONG}>
      {Array.from({ length: 48 }, (_, i) => {
        const c = COORDS[i < 31 ? (i * 5) % 17 : i - 31];
        return (
          <div key={i} className="flex h-[13.7px] border-b border-[#888] text-center text-[9.5px] font-bold leading-[13px] tracking-[-0.6px] text-[#222]">
            <span className="w-[47px] border-r border-[#888]">J{i + 9}</span>
            <span className="w-[46px] overflow-hidden border-r border-[#888]">{c[0]}</span>
            <span className="w-[46px] overflow-hidden bg-[#eef1f3]">{c[1]}</span>
          </div>
        );
      })}
    </div>
  );
}

function MapSheet() {
  return (
    <div className={"absolute left-[1441px] top-[392px] h-[1353px] w-[957px] border-[3px] border-[#333] bg-white p-[14px] text-[#222] shadow-[5px_6px_0_#777] " + SONG}>
      <div className="flex h-[1315px] w-[922px] flex-col border-2 border-dotted border-[#c9c9c9] px-[32px] pt-[24px]">
        <div className="flex h-[54px]">
          <Fit className="ml-[332px] mt-[5px] w-[142px] !text-[35px] !leading-[38px] font-bold text-black">宗  地  图</Fit>
          <Fit className="ml-[243px] mt-[25px] w-[114px]">单位：m/㎡</Fit>
        </div>
        <div className="flex h-[1124px] w-[852px] shrink-0 flex-col border-2 border-[#333]">
          <div className="flex h-[77px] shrink-0 flex-col gap-[9px] border-b-[3px] border-[#444] pt-[2px]">
            <div className="flex">
              <Fit className="w-[122px]">宗地代码：</Fit><Fit className={"ml-[25px] w-[192px] !text-[25px] " + MONO}>452428A123666JA4</Fit>
              <Fit className="ml-[121px] w-[140px]">土地权利人：</Fit><Fit className="ml-[8px] w-[69px]">孙悟空</Fit>
            </div>
            <div className="flex">
              <Fit className="ml-[2px] w-[139px]">所在图幅号：</Fit><Fit className={"ml-[6px] w-[118px] !text-[25px] " + MONO}>H50G046091</Fit>
              <Fit className="ml-[195px] w-[118px]">宗地面积：</Fit><Fit className={"ml-[30px] w-[83px] !text-[25px] " + MONO}>4687.18</Fit>
            </div>
          </div>
          <Table />
        </div>
        <div className="flex justify-between">
          <Fit className="-ml-[1px] mt-[14px] w-[297px]">2024年5月解析法测绘界址点</Fit>
          <div className="mr-[11px] mt-[8px] flex flex-col gap-[4px]">
            <Fit className="w-[202px]">制图员：GIS程序猿</Fit><Fit className="w-[202px]">审核员：GIS程序猿</Fit>
          </div>
        </div>
        <Fit className="-mt-[14px] w-[200px]">  日期：2024年5月</Fit>
      </div>
      <svg viewBox="1690 1000 330 120" className="absolute left-[246px] top-[605px] h-[120px] w-[330px] font-['Liberation_Serif',serif]">
        <path d="M1840 1020L1818 1044L1792 1062L1723 1079L1765 1108M1989 1020L1987 1044L1984 1066L1982 1095" fill="none" stroke="#cf2a20" strokeWidth="4" />
        <g fill="#234"><circle cx="1792" cy="1062" r="4" /><circle cx="1723" cy="1079" r="4" /><circle cx="1984" cy="1066" r="4" /></g>
        <g fontSize="19" fill="#333">
          <text x="1798" y="1056">J54</text><text x="1727" y="1074">J53</text><text x="1698" y="1080">J52</text>
          <text x="1774" y="1104">J51</text><text x="1970" y="1080">J29</text><text x="2000" y="1096">J30</text>
        </g>
      </svg>
    </div>
  );
}

function MapView() {
  return (
    <div className="flex h-[1484px] bg-white">
      <div className="w-[519px] bg-white" />
      <div className="w-[12px] border-x-2 border-[#999] bg-[#ececec]" />
      <div className="flex w-[39px] flex-col items-center justify-end border-x-[3px] border-[#888] bg-[#f0f0f0] pb-[67px]">
        {[3, 2, 1].map((n) => (
          <div key={n} className="flex h-[45.4px] w-[28px] shrink-0 items-end justify-between border-b-2 border-l-2 border-[#555] border-l-[#999] bg-white">
            <span className="mb-[1px] block h-[20px] w-[16px] -rotate-90 text-center font-['Liberation_Sans',sans-serif] text-[17px] leading-[20px] text-[#333]">{n}</span>
            <span className="mb-[20px] h-[3px] w-[3px] bg-[#333]" />
          </div>
        ))}
        <div className="h-[26px] w-[28px] shrink-0 border-l-2 border-[#999] bg-white" />
        <div className="h-[19px] w-[28px] shrink-0 border-l-2 border-[#ccc] bg-[#a8a8a8]" />
      </div>
    </div>
  );
}

function ScrollRow() {
  return (
    <div className="flex h-[31px] items-center border-t-2 border-[#ddd] bg-[#f0f0f0] pb-[3px]">
      <div className="h-[33px] w-[519px] border-b-2 border-r-2 border-[#999] bg-white" />
      <div className="h-full w-[13px] border-r-2 border-[#888]" />
      <Ic className="ml-[6px] size-[18px]" l={[[rect(3, 1, 26, 30), "#e6f0c0", k, 3], ["M7 26l18-20", "", "#7aa03a", 6]]} />
      <span className="ml-[8px] flex h-[26px] w-[30px] items-center justify-center rounded border-2 border-[#777] bg-[#ddd]">
        <Ic className="size-[19px]" l={[[page, "#fff", k, 3], ["M9 14h12v10h-12z", "#6a9ec4"]]} />
      </span>
      <span className="ml-[4px] h-6 w-[2px] bg-[#999]" />
      <Ic className="ml-[15px] size-[18px]" l={[["M27 12A12 12 0 0 0 5 11M5 20a12 12 0 0 0 22 1", "", "#2a5f9e", 4], ["M3 3v11h10zM29 29v-11h-10z", "#2a5f9e"]]} />
      <Ic className="ml-[13px] size-[15px]" l={[[rect(5, 2, 7, 28), "#2a5f9e"], [rect(20, 2, 7, 28), "#2a5f9e"]]} />
      <span className="ml-[19px] h-0 w-0 border-y-[7px] border-r-[8px] border-y-transparent border-r-[#444]" />
      <div className="ml-[13px] flex h-[26px] grow items-center gap-[3px] rounded-l border-l-2 border-[#999] bg-gradient-to-b from-[#f3f3f3] via-[#dedede] to-[#b9babc] pl-[1256px]">
        <span className="h-3 w-[2px] bg-[#555]" /><span className="h-3 w-[2px] bg-[#555]" /><span className="h-3 w-[2px] bg-[#555]" />
      </div>
    </div>
  );
}

function StatusBar() {
  return (
    <div className={"relative flex h-[41px] items-center border-b-[3px] border-[#6f8396] bg-[#efefef] pt-[7px] " + UI}>
      <L className="ml-[2789px] w-[65px]">-18.68</L><L className="ml-[15px] w-[43px]">5.80</L><L className="ml-[8px] w-[44px]">厘米</L>
      <div className="absolute left-[3092px] top-[-12px] h-[50px] w-[38px] bg-white" />
      <svg viewBox="0 0 60 60" className="absolute left-[3059px] top-[-13px] size-[58px]">
        <path d="M1 11Q22 4 42 1Q47 0 48 5L57 44Q57 49 52 50L18 58Q12 59 11 54Z" fill="#f9661f" />
        <path d="M42 14q-24-4-26 7t21 8q9 3 4 9t-28 6" fill="none" stroke="#fff" strokeWidth="7" />
      </svg>
      <span className="absolute left-[3127px] top-[10px] h-[20px] w-[8px] rounded-full bg-[#1e74c8]" />
    </div>
  );
}

const TaskBtn = ({ className, children }: { className: string; children: ReactNode }) => (
  <div className={"flex h-[71px] shrink-0 items-center justify-center rounded-[5px] border-2 border-[#2f6592] shadow-[inset_0_0_0_2px_#9ed0f1] " + className}>{children}</div>
);
const pane = "bg-gradient-to-b from-[#7ab7e2] to-[#4a9fd8]";

function Taskbar() {
  return (
    <div className="flex h-[74px] items-center bg-[linear-gradient(90deg,#2182c4_0%,#2f93d2_10%,#2f8fce_30%,#3f9edb_35%,#3591d3_45%,#2080c8_50%,#3587d2_54%,#1c78c8_58%,#1a6fbe_64%,#2477c4_70%,#1762b0_73%,#1762b0_83%,#174f8c_86%,#1a4f88_94%,#153f74_100%)]">
      <div className="h-[46px] w-[15px] rounded-r-full bg-[#cfd6dc]" />
      <Ic className="ml-[54px] size-[60px]" l={[["M25 21a9.500 10.500 0 1 1 1-6h-15", "", "#6fd0f7", 5.5], ["M4 27Q1 22 9 12Q18 1 25 3Q29 5 26 9", "", "#f0c32c", 2.4], ["M4 27q4 1 7-2", "", "#f0c32c", 2]]} />
      <Ic className="ml-[54px] size-[58px]" l={[["M10 3l16 2-3 25-20-5z", "#79b9cf", "#bde0ea", 1], ["M26 5l2 22-5 3z", "#e8eef0"], ["M10 3l16 2v2l-16-2z", "#ddd"], ["M10 6l6 1-11 16z", "#a9d9e6"]]} />
      <TaskBtn className={"ml-[28px] w-[108px] " + pane}>
        <svg viewBox="0 0 60 60" className="size-[60px]">
          <circle cx="30" cy="30" r="29" fill="#dd4b3e" />
          <path d="M30 30L5 15A29 29 0 0 0 27 59L41 37Z" fill="#1f9e55" />
          <path d="M30 16H55A29 29 0 0 1 27 59L43 36Z" fill="#fdcb3f" />
          <circle cx="30" cy="30" r="14" fill="#fff" /><circle cx="30" cy="30" r="11" fill="#2a74ee" />
        </svg>
      </TaskBtn>
      <div className="ml-[29px] flex size-[59px] items-center justify-center rounded-[10px] bg-white">
        <svg viewBox="0 0 50 50" className="size-[48px]" fill="none" strokeWidth="5">
          <circle cx="13" cy="32" r="9" stroke="#1a9ff0" /><circle cx="37" cy="32" r="9" stroke="#1a9ff0" />
          <path d="M16 18a9 9 0 0 1 18-2" stroke="#1a9ff0" /><circle cx="25" cy="19" r="8" stroke="#ef4a5a" strokeDasharray="28 23" />
          <path d="M18 25l14 14" stroke="#1a9ff0" />
        </svg>
      </div>
      <TaskBtn className="ml-[29px] w-[93px] bg-gradient-to-b from-[#cfe2f2] to-[#a9cfec]">
        <svg viewBox="0 0 60 60" className="size-[60px]">
          <circle cx="29" cy="30" r="28" fill="#15568f" /><path d="M36 14q14 2 18 14l-8 12-10-6zM34 42l8 4-4 8-8 2z" fill="#3b9a4a" />
          <circle cx="24" cy="24" r="13" fill="#a8e0f6" stroke="#dfe6ea" strokeWidth="4" /><path d="M36 35l20 22" stroke="#a65b2b" strokeWidth="7" />
        </svg>
      </TaskBtn>
      <span className="h-[69px] w-[6px] border-r-2 border-[#2f6592] bg-[#7fbce4]" /><span className="h-[67px] w-[6px] border-r-2 border-[#2f6592] bg-[#5dabdd]" />
      <TaskBtn className={"ml-[6px] w-[93px] " + pane}>
        <svg viewBox="0 0 60 60" className="size-[60px]">
          <path d="M3 6h12l4 5h38v44H3z" fill="#ecca69" stroke="#c09a3c" /><path d="M10 8h6v8h-6z" fill="#3aa14c" /><path d="M22 12h14v6h-14z" fill="#c6503a" />
          <path d="M3 18h54v37H3z" fill="#f6df92" /><path d="M10 58V40q0-4 4-4h32q4 0 4 4v18h-9V46H19v12z" fill="#7cc6ea" stroke="#4a9cc8" />
        </svg>
      </TaskBtn>
      <span className="h-[69px] w-[7px] border-r-2 border-[#2f6592] bg-[#5dabdd]" /><span className="h-[67px] w-[7px] border-r-2 border-[#2f6592] bg-[#4a9fd8]" />
      <TaskBtn className={"ml-[5px] w-[107px] " + pane}>
        <svg viewBox="0 0 60 50" className="h-[50px] w-[60px]">
          <path d="M8 32l-1 8 7-4z" fill="#1fbf5c" /><ellipse cx="22" cy="20" rx="21" ry="19" fill="#1fbf5c" /><circle cx="15" cy="14" r="3" fill="#0b6c33" /><circle cx="29" cy="14" r="3" fill="#0b6c33" />
          <ellipse cx="42" cy="32" rx="17" ry="15" fill="#eee" /><path d="M50 42l4 8-9-4z" fill="#eee" /><circle cx="37" cy="28" r="2" fill="#777" /><circle cx="48" cy="28" r="2" fill="#777" />
        </svg>
      </TaskBtn>
      <TaskBtn className={"ml-[5px] w-[108px] " + pane}>
        <svg viewBox="0 0 60 56" className="h-[54px] w-[58px]">
          <path d="M12 2h44v50H4V10z" fill="#b9dfaa" stroke="#2f7c34" strokeWidth="3" />
          <path d="M10 10h11l7 13 9-13h10l-14 19 12 19h-11l-7-11-8 11h-9l12-18z" fill="#1e7a33" />
          <path d="M30 34l28-7-4 26-26 2z" fill="#fff" opacity=".92" /><path d="M35 38l6-1M44 36l9-2M34 43l6-1M43 41l9-2M33 49l6-1M42 47l8-1" stroke="#7fa07a" strokeWidth="2.500" />
        </svg>
      </TaskBtn>
      <div className="ml-[1312px] h-[70px] w-[32px] skew-x-[54deg] bg-[#9cc8f2] blur-[3px]" />
      <div className="ml-auto flex items-center pr-[6px]">
        <span className="mb-[6px] mr-[29px] font-['Liberation_Serif',serif] text-[21px] leading-none text-white">CH</span>
        <span className="flex items-center gap-[11.500px]">
          <Ic l={[["M5 1h22q4 0 4 4v22q0 4-4 4h-22q-4 0-4-4v-22q0-4 4-4z", "#f43560"], ["M7 8l9 6 9-3v13l-9-6-9 2z", "#fff"]]} />
          <Ic l={[[circ(11, 12, 10), "#2fae60"], [circ(22, 21, 9), "#eee"]]} />
          <Ic l={[[rect(6, 2, 18, 28), "#b8dcf4", "#6aa6d4"], [circ(19, 13, 10), "", "#cb9a3e", 3]]} />
          <Ic l={[[circ(16, 7, 6), "#f5a9ab"], [circ(16, 25, 6), "#f5a9ab"], [circ(7, 12, 6), "#f5a9ab"], [circ(25, 12, 6), "#f5a9ab"], [circ(7, 21, 6), "#f5a9ab"], [circ(25, 21, 6), "#f5a9ab"], [circ(16, 16, 5), "#b07e98"]]} />
          <Ic l={[[circ(17, 18, 12), "#2467ac"], ["M13 8q12 0 8 9t-9 9q-4-6 2-10z", "#62c06e"]]} />
          <Ic l={[[rect(2, 1, 28, 30), "#1c82cc", "#cfe6f8"], ["M9 6h16v20h-16M9 11h12M9 16h12v10", "", "#e8f4ff", 2.5], ["M3 20l9 10h-9z", "#e2c14c"]]} />
          <Ic l={[[circ(21, 10, 8), "#8fc8f4"], [circ(22, 22, 8), "#5aa5ea"], [circ(11, 15, 9), "#f7bf39"]]} />
          <Ic l={[["M3 12h5l8-9v26l-8-8h-5z", "#e8eef4"], [circ(22, 23, 8), "#d13d33"], ["M19 20l6 6M25 20l-6 6", "", "#fff", 2.5]]} />
          <Ic l={[[rect(12, 8, 18, 15), "#27527e", "#eee", 2.5], ["M14 28h14M21 23v5M5 2v8M9 2v8M3 9h8v5h-8zM7 14v16", "", "#eee", 2.5]]} />
          <Ic l={[[rect(4, 10, 13, 18), "#777", "#999"], [rect(7, 2, 8, 8), "#ccc"], [circ(22, 22, 9), "#2b9b36"], ["M17 22l4 4 6-9", "", "#fff", 3]]} />
        </span>
      </div>
    </div>
  );
}

const WinGlyphs = ({ red }: { red: boolean }) => (
  <div className="flex h-[35px] rounded-b-[8px] border-2 border-t-0 border-[#6d7f90]">
    <span className={"flex items-center justify-center border-r-2 border-[#8a9aab] " + (red ? "w-[50px] bg-gradient-to-b from-[#dfe6ee] to-[#aebccc]" : "w-[50px]")}>
      <span className="mt-3 h-[10px] w-[22px] rounded-sm border-2 border-[#555] bg-white" />
    </span>
    <span className={"flex items-center justify-center border-r-2 border-[#8a9aab] " + (red ? "w-[50px] bg-gradient-to-b from-[#dfe6ee] to-[#aebccc]" : "w-[50px]")}>
      <span className="flex h-[19px] w-[21px] items-center justify-center rounded-sm border-2 border-[#555] bg-white"><span className="h-[8px] w-[10px] border-2 border-[#555]" /></span>
    </span>
    <span className={"flex items-center justify-center " + (red ? "w-[84px] rounded-br-[6px] bg-gradient-to-b from-[#e8a08c] via-[#cf4b2e] to-[#d9694c]" : "w-[83px]")}>
      <Ic className="h-[22px] w-[24px]" l={[["M5 4h8l3 6 3-6h8l-7 12 7 12h-8l-3-6-3 6h-8l7-12z", "#fff", "#555", 2.500]]} />
    </span>
  </div>
);

function Explorer() {
  return (
    <div className={"absolute left-[-10px] top-[242px] flex h-[1060px] w-[826px] flex-col rounded-tr-[12px] border-[2px] border-[#6e7880] bg-[linear-gradient(180deg,#e6fbff_0%,#f6feff_12%,#fbfbfb_18%,#f6f6f6_100%)] pr-[11px] " + UI}>
      <div className="flex h-[66px] bg-[linear-gradient(180deg,#dff2fb_0%,#e9fbfd_50%,#c2eefc_85%,#d8f8fe_100%)]">
        <div className="mt-[7px] flex h-[20px] gap-[30px] pl-[54px] opacity-50 blur-[6px]">
          <span className="w-[70px] bg-[#6c86b8]" /><span className="w-[66px] bg-[#6c86b8]" /><span className="w-[60px] bg-[#6c86b8]" /><span className="w-[66px] bg-[#6c86b8]" /><span className="w-[112px] bg-[#6c86b8]" /><span className="w-[40px] bg-[#6c86b8]" />
        </div>
        <div className="ml-auto"><WinGlyphs red={false} /></div>
      </div>
      <div className="mt-[-6px] flex h-[40px]">
        <div className="flex w-[314px] items-center justify-between border-2 border-[#8b9aa4] bg-white/90 pr-[8px]">
          <Fit className="-ml-[4px] w-[124px] text-[#333]">建文件夹 (9)</Fit><Caret className="border-x-[6px] border-t-[9px] border-t-[#118]" />
        </div>
        <div className="flex w-[44px] items-center justify-center border-y-2 border-r-2 border-[#8b9aa4] bg-white/90">
          <Ic className="size-7" l={[["M10 3q-5 8-2 15M22 29q5-8 2-15", "", "#2f74b8", 4], ["M2 15h12l-5 9zM18 17h12l-6-9z", "#2f74b8"]]} />
        </div>
        <div className="ml-[11px] flex w-[438px] items-center justify-between border-2 border-[#9aa6ae] bg-white/90 pl-[16px] pr-[8px]">
          <Fit className="w-[194px] italic text-[#666]">搜索 新建文件夹 (9)</Fit>
          <Ic className="size-[26px]" l={[[circ(19, 12, 9), "#eef8ff", "#3b7cc0", 4], ["M12 19l-9 11", "", "#2c62a4", 5]]} />
        </div>
      </div>
      <div className="h-[14px] shrink-0" />
      <div className="flex h-[59px] shrink-0 items-center border-2 border-l-0 border-[#8f9aa6] bg-gradient-to-b from-[#fbfdff] via-[#e3ecf8] to-[#dae6f5] pl-[588px]">
        <Ic className="size-[26px]" l={[[rect(2, 2, 28, 27), "#fff", "#8aa0b0"], [rect(6, 6, 20, 18), "#8cc7e4"], ["M6 24v-10l20 8v2z", "#2a7a6c"]]} />
        <span className="w-[14px]" /><Caret className="border-x-[7px] border-t-[9px] border-t-[#1c3456]" />
        <Ic className="ml-[34px] size-[30px]" l={[[rect(1, 3, 30, 26), "#fff", "#6a7c8c"], [rect(20, 4, 10, 24), "#6fc0da", "#4e8ca6"], ["M1 8h19", "", "#6a7c8c"]]} />
        <Ic className="ml-[35px] size-[30px]" l={[[circ(16, 16, 14), "#2646a8", "#8d95a8", 3], ["M11 12q0-5 5-5t5 5q0 3-5 5v3M16 23v3", "", "#fff", 3]]} />
      </div>
      <div className="h-[714px] shrink-0 border-r-2 border-[#a5abb0] bg-[#fcfcfc] pt-[30px]">
        <Fit className="ml-[325px] w-[140px] text-[#6a6a6a]">该文件夹为空。</Fit>
      </div>
      <div className="h-[154px] shrink-0 border-2 border-[#ccd6e2] bg-[#f0f5fc]" />
    </div>
  );
}

const Select = ({ className, children }: { className: string; children: ReactNode }) => (
  <div className={"flex h-[37px] shrink-0 items-center justify-between rounded-[5px] border-2 border-[#858585] bg-gradient-to-b from-[#f2f2f2] via-[#e8e8e8] to-[#d2d2d2] pl-[5px] pr-[2px] " + className}>
    {children}<Caret className="border-x-[7px] border-t-[10px] border-t-black" />
  </div>
);
const Input = ({ className, children }: { className: string; children?: ReactNode }) => (
  <div className={"flex h-[37px] shrink-0 items-start border-2 border-[#dfe2e6] border-t-[#a9abb0] pl-[2px] pt-[2px] text-[21.5px] leading-[26px] " + className}>{children}</div>
);
const Check = ({ on = false, className = "" }: { on?: boolean; className?: string }) => (
  <span className={"flex size-[23px] shrink-0 items-center justify-center border-2 border-[#8e8f8f] bg-[#eef0f3] " + className}>
    {on && <Ic className="size-[20px]" l={[["M6 14l7 12L27 4", "", "#3c5fa8", 5]]} />}
  </span>
);
const Btn = ({ className, children }: { className: string; children?: ReactNode }) => (
  <div className={"flex shrink-0 items-center justify-center rounded-[5px] border-2 border-[#858585] bg-gradient-to-b from-[#f3f3f3] via-[#ebebeb] to-[#d0d0d0] " + className}>{children}</div>
);
const Item = ({ className, children }: { className: string; children: ReactNode }) => (
  <Fit className={"!leading-[21.6px] " + className}>{children}</Fit>
);

function Dialog() {
  return (
    <div className={"absolute left-[472px] top-[635px] flex h-[940px] w-[901px] flex-col rounded-[12px] border-[3px] border-[#5f7e9c] bg-gradient-to-r from-[#bcd9f8] via-[#c3dbf7] to-[#b3d3f5] px-[9px] text-black " + SONG}>
      <div className="flex h-[50px] shrink-0 items-center rounded-t-lg bg-[linear-gradient(90deg,#cfe3fa,#e3effc_30%,#b2d1f3_62%,#c6def8)] pb-[2px]">
        <Ic className="ml-[4px] size-[25px]" l={[[rect(1, 12, 11, 12), "#d2452f", "#8d2a1c", 1.5], [rect(13, 2, 17, 18), "#f5c23a", "#a77d17", 1.5], [rect(12, 22, 13, 9), "#4d8be0", "#2c5ca6", 1.5]]} />
        <Fit className={"ml-[10px] w-[381px] " + UI}>批量出图(动态文本、表格) - GIS程序猿</Fit>
        <div className="ml-auto self-start"><WinGlyphs red /></div>
      </div>
      <div className="h-[877px] shrink-0 border-2 border-[#7f8e9e] bg-[#efefef] pl-[30px] pt-[20px]">
        <div className="flex h-[37px] items-center">
          <Fit className="w-[131px]">数据驱动图层</Fit>
          <Select className="ml-[16px] w-[180px]"><Fit className="w-[119px]">A28宗地范围</Fit></Select>
          <Fit className="ml-[36px] w-[131px]">出图命名字段</Fit>
          <Select className="ml-[25px] w-[240px]"><Fit className="w-[66px]">地块名</Fit></Select>
        </div>
        <div className="mt-[12px] flex h-[37px] items-center">
          <Fit className="ml-[65px] w-[66px]">分辨率</Fit>
          <Input className="ml-[16px] w-[179px] bg-white"><Fit className={"w-[33px] !text-[23px] " + MONO}>300</Fit></Input>
          <Fit className="ml-[156px] w-[18px]">1:</Fit>
          <Input className="ml-[19px] w-[239px] justify-between bg-white">
            <Fit className={"w-[44px] !text-[23px] " + MONO}>1000</Fit>
            <span className="flex h-[30px] w-[24px] flex-col items-center justify-around border border-[#aaa] bg-[#eee]">
              <span className="h-0 w-0 border-x-[6px] border-b-[7px] border-x-transparent border-b-[#4964a8]" /><span className="h-0 w-0 border-x-[6px] border-t-[7px] border-x-transparent border-t-[#4964a8]" />
            </span>
          </Input>
        </div>
        <div className="mt-[11px] flex h-[38px] items-center">
          <Fit className="ml-[44px] w-[87px]">保存路径</Fit>
          <Input className="ml-[16px] w-[612px] border-[#bfdcf0] bg-white">
            <span className="flex bg-[#3399ff] pr-[3px] text-white">
              <Fit className={"w-[338px] !text-[20px] " + MONO}>C:\Users\Administrator\Desktop\</Fit>
              <Fit className="w-[87px]">新建文件</Fit>
            </span>
          </Input>
        </div>
        <div className="mt-[16px] flex h-[37px] items-center">
          <Check className="ml-[11px] mt-[5px]" />
          <Fit className="ml-[6px] mt-[5px] w-[174px]">出图等待时间(秒)</Fit>
          <Input className="ml-[24px] w-[210px] text-[#777]">1</Input>
          <Fit className="ml-[14px] w-[43px]">缩放</Fit>
          <Input className="ml-[15px] w-[239px] bg-white" />
        </div>
        <fieldset className="ml-[1px] mt-[42px] h-[242px] w-[822px] rounded border-2 border-[#dde2e6] pl-[6px]">
          <legend className="flex items-center pr-[14px]"><Check on /><Fit className="ml-[8px] w-[130px]">设置动态文本</Fit></legend>
          <div className="mt-[9px] flex items-center">
            <Fit className="ml-[34px] w-[88px]">图层字段</Fit>
            <Select className="ml-[17px] w-[178px]"><Fit className="w-[43px]">面积</Fit></Select>
          </div>
          <div className="flex">
            <div className="ml-[103px] mt-[14px] h-[139px] w-[550px] shrink-0 border-2 border-[#888c94] bg-white pt-[3px]">
              <Item className="ml-[4px] w-[173px]">ZDDM-&gt;宗地代码值</Item>
              <Item className="ml-[4px] w-[118px]">QLR-&gt;权利人</Item>
              <Item className="ml-[4px] w-[118px]">TFH-&gt;图幅号</Item>
              <div className="bg-[#3399ff] pl-[4px] text-white"><Item className="w-[140px]">面积-&gt;面积666</Item></div>
            </div>
            <Btn className="ml-[10px] mt-[73px] h-[34px] w-[117px]" />
          </div>
        </fieldset>
        <div className="flex h-[299px]">
          <fieldset className="ml-[1px] mt-[15px] h-[270px] w-[420px] shrink-0 rounded border-2 border-[#dde2e6] pl-[6px]">
            <legend className="flex items-center pr-[14px]"><Check on /><Fit className="ml-[7px] w-[152px]">生成节点坐标表</Fit></legend>
            <div className="mt-[10px] flex items-center"><Fit className="ml-[26px] w-[188px]">表格左下角位置X/Y</Fit><Input className="ml-[15px] w-[150px] bg-white">1</Input></div>
            <div className="mt-[12px] flex items-center"><Fit className="ml-[5px] w-[211px]">单元格宽度、高度/cm</Fit><Input className="ml-[13px] w-[150px] bg-white">1</Input></div>
            <div className="mt-[11px] flex items-center"><Fit className="ml-[82px] w-[131px]">表格文本大小</Fit><Input className="ml-[16px] w-[150px] bg-white">6</Input></div>
            <div className="mt-[14px] flex items-center"><Check className="ml-[229px]" /><Fit className="ml-[8px] w-[87px]">回到起点</Fit></div>
            <div className="mt-[5px] flex items-center"><Fit className="ml-[102px] w-[109px]">编号前字母</Fit><Input className="ml-[18px] w-[154px] bg-white">J</Input></div>
          </fieldset>
          <div className="ml-[17px] mt-[277px] flex shrink-0 items-center self-start"><Check on /><Fit className="ml-[7px] w-[131px]">测试10条数据</Fit></div>
          <div className="ml-[25px] mt-[221px] flex flex-col gap-[8px]">
            <Btn className="h-[34px] w-[132px]"><Fit className="w-[86px]">预览一下</Fit></Btn>
            <Btn className="h-[49px] w-[132px]"><Fit className="w-[87px]">批量出图</Fit></Btn>
          </div>
        </div>
        <Fit className="ml-[16px] mt-[9px] w-[88px] text-[#1414c8]"><span className="underline underline-offset-2">关于插件</span></Fit>
      </div>
    </div>
  );
}

function Overlay() {
  return (
    <svg viewBox="0 0 3130 1957" className="pointer-events-none absolute left-0 top-0 h-[1957px] w-[3130px]">
      <defs>
        <g id="headline" fontWeight="900" strokeLinejoin="round">
          <text x="864" y="1005" textLength="152" lengthAdjust="spacingAndGlyphs" fontFamily="'DejaVu Sans Condensed','DejaVu Sans',sans-serif" fontSize="297">1</text>
          <text x="1035" y="1003" textLength="222" lengthAdjust="spacingAndGlyphs" fontFamily="Roboto,sans-serif" fontWeight="700" fontSize="300">0</text>
          <g fontFamily="'Noto Sans CJK SC',sans-serif" fontSize="240">
            <text x="1259" y="986" textLength="1034">分钟搞定</text>
            <text x="792" y="1323" textLength="1550">批量出宗地图</text>
          </g>
        </g>
      </defs>
      <use href="#headline" fill="#692716" stroke="#692716" strokeWidth="76" />
      <use href="#headline" fill="#feeca6" stroke="#feeca6" strokeWidth="52" />
      <use href="#headline" fill="#a0280e" stroke="#a0280e" strokeWidth="3" />
      <text x="960" y="1729" fontFamily="'Noto Sans CJK SC',sans-serif" fontWeight="700" fontSize="98" textLength="1204" fill="#fedc0a" stroke="#000" strokeWidth="13" strokeLinejoin="round" className="[paint-order:stroke]">需要把之前生成的图片删掉</text>
      <path d="M769 679V722L779 712L786 729L793 725L786 709H797Z" fill="#f8f8f8" stroke="#444" strokeWidth="2" />
    </svg>
  );
}

export default function App() {
  return (
    <div className="relative flex h-[1957px] w-[3130px] flex-col overflow-hidden bg-white">
      <TitleBar />
      <Toolbars />
      <HRuler />
      <MapView />
      <ScrollRow />
      <StatusBar />
      <Taskbar />
      <MapSheet />
      <Explorer />
      <Dialog />
      <Overlay />
    </div>
  );
}
